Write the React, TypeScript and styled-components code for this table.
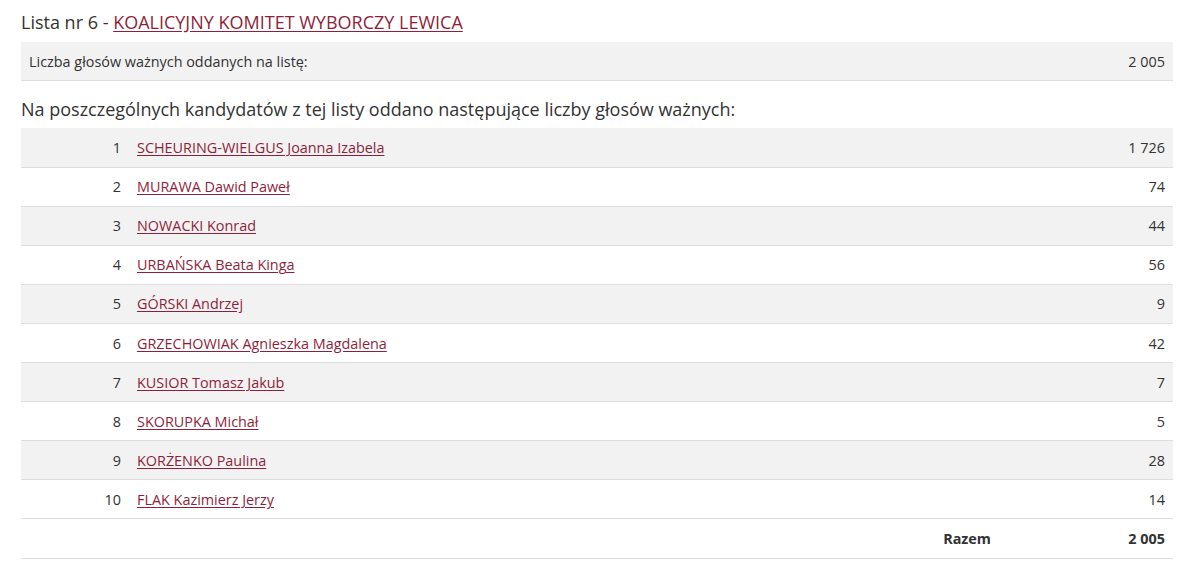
import React from "react";
import styled, { createGlobalStyle } from "styled-components";

const candidates = [
  { no: 1, name: "SCHEURING-WIELGUS Joanna Izabela", votes: "1 726" },
  { no: 2, name: "MURAWA Dawid Paweł", votes: "74" },
  { no: 3, name: "NOWACKI Konrad", votes: "44" },
  { no: 4, name: "URBAŃSKA Beata Kinga", votes: "56" },
  { no: 5, name: "GÓRSKI Andrzej", votes: "9" },
  { no: 6, name: "GRZECHOWIAK Agnieszka Magdalena", votes: "42" },
  { no: 7, name: "KUSIOR Tomasz Jakub", votes: "7" },
  { no: 8, name: "SKORUPKA Michał", votes: "5" },
  { no: 9, name: "KORŻENKO Paulina", votes: "28" },
  { no: 10, name: "FLAK Kazimierz Jerzy", votes: "14" },
];

const App = () => {
  return (
    <Page>
      <GlobalStyle />
      <Title>
        Lista nr 6 - <TitleLink href="#">KOALICYJNY KOMITET WYBORCZY LEWICA</TitleLink>
      </Title>
      <SummaryRow>
        <span>Liczba głosów ważnych oddanych na listę:</span>
        <span>2 005</span>
      </SummaryRow>
      <SubTitle>Na poszczególnych kandydatów z tej listy oddano następujące liczby głosów ważnych:</SubTitle>
      <Table>
        <colgroup>
          <col style={{ width: 108 }} />
          <col />
          <col style={{ width: 174 }} />
        </colgroup>
        <tbody>
          {candidates.map((c) => (
            <Row key={c.no} striped={c.no % 2 === 1}>
              <NoCell>{c.no}</NoCell>
              <NameCell>
                <NameLink href="#">{c.name}</NameLink>
              </NameCell>
              <VotesCell>{c.votes}</VotesCell>
            </Row>
          ))}
          <Row striped={false}>
            <NoCell />
            <TotalLabel>Razem</TotalLabel>
            <VotesCell bold>2 005</VotesCell>
          </Row>
        </tbody>
      </Table>
    </Page>
  );
};

export default App;

const GlobalStyle = createGlobalStyle`
  body {
    margin: 0;
    background: #fff;
    font-family: "Open Sans", "Noto Sans", sans-serif;
    color: #333;
  }
`;

const Page = styled.div`
  padding: 11px 27px 0 21px;
`;

const Title = styled.h2`
  margin: 0;
  font-size: 18px;
  font-weight: 400;
  line-height: 22px;
  color: #333;
`;

const TitleLink = styled.a`
  color: #8e1f3b;
  text-decoration: underline;
  text-underline-offset: 2px;
`;

const SummaryRow = styled.div`
  margin-top: 9px;
  height: 38px;
  display: flex;
  align-items: center;
  justify-content: space-between;
  padding: 0 8px;
  background: #f2f2f2;
  border-bottom: 1px solid #dedede;
  font-size: 14.4px;
`;

const SubTitle = styled.h3`
  margin: 17px 0 8px;
  font-size: 18px;
  font-weight: 400;
  line-height: 22px;
  color: #333;
`;

const Table = styled.table`
  width: 100%;
  border-collapse: collapse;
  table-layout: fixed;
  font-size: 14.4px;
`;

const Row = styled.tr<{ striped: boolean }>`
  height: 39.1px;
  background: ${(p) => (p.striped ? "#f2f2f2" : "#fff")};
  border-bottom: 1px solid #dedede;
`;

const NoCell = styled.td`
  text-align: right;
  padding: 0 8px;
`;

const NameCell = styled.td`
  padding: 0 8px;
`;

const NameLink = styled.a`
  color: #8e1f3b;
  text-decoration: underline;
  text-underline-offset: 2px;
`;

const TotalLabel = styled.td`
  text-align: right;
  padding: 0 8px;
  font-weight: 700;
`;

const VotesCell = styled.td<{ bold?: boolean }>`
  text-align: right;
  padding: 0 8px;
  font-weight: ${(p) => (p.bold ? 700 : 400)};
`;
